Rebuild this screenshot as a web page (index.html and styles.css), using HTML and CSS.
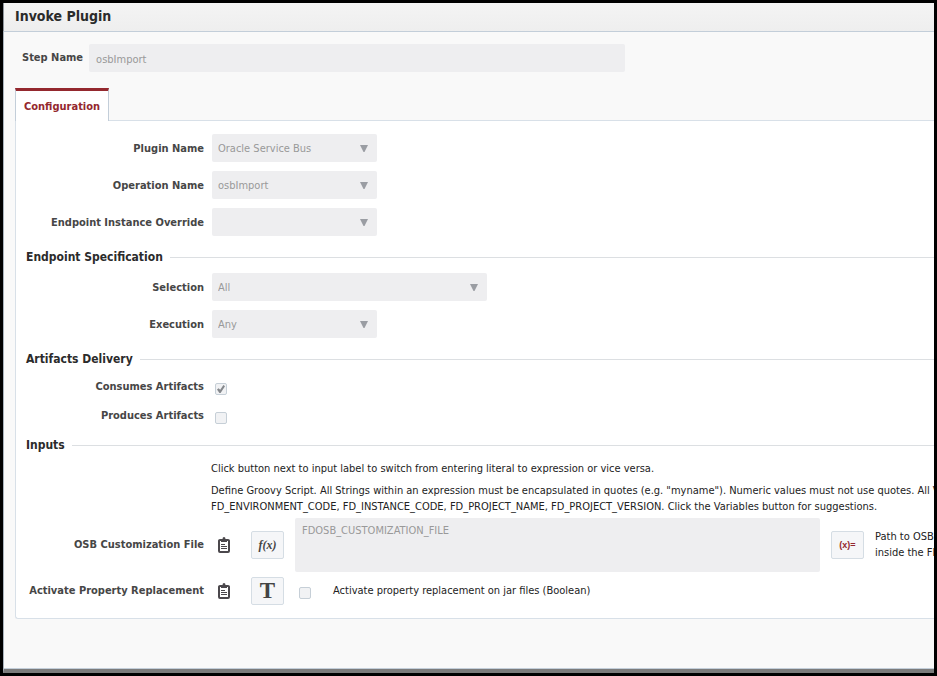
FILE: index.html
```html
<!DOCTYPE html>
<html lang="en">
<head>
<meta charset="utf-8">
<title>Invoke Plugin</title>
<link rel="stylesheet" href="styles.css">
</head>
<body>
<svg class="sprite" aria-hidden="true">
  <symbol id="clipboard" viewBox="0 0 12 16">
    <path d="M1 3.500V14Q1 15 2 15H10Q11 15 11 14V3.500" fill="none" stroke="#4b484c" stroke-width="2"/>
    <path d="M0 4Q0 2 2 2H3V4ZM12 4Q12 2 10 2H9V4ZM3 5V2H4.500Q4.500 0 6 0T7.500 2H9V5Z" fill="#4b484c"/>
    <path d="M3 7.500H7M3 9.500H9M3 11.500H9" stroke="#4b484c" stroke-width="1"/>
  </symbol>
  <symbol id="arrow" viewBox="0 0 8 8">
    <path d="M0 0H8L4.500 7H3.500Z" fill="#9a9da3"/>
  </symbol>
</svg>
<main class="dialog">
  <header class="titlebar"><h1>Invoke Plugin</h1></header>
  <form class="content">
    <div class="step">
      <label for="step">Step Name</label>
      <input class="field" id="step" type="text" value="osbImport" disabled>
    </div>
    <nav class="tabs"><a class="tab" href="#config">Configuration</a></nav>
    <section class="panel" id="config">
      <div class="rows">
        <div class="row">
          <label for="plugin">Plugin Name</label>
          <div class="select"><select class="field" id="plugin" disabled><option>Oracle Service Bus</option></select><svg><use href="#arrow"/></svg></div>
        </div>
        <div class="row">
          <label for="operation">Operation Name</label>
          <div class="select"><select class="field" id="operation" disabled><option>osbImport</option></select><svg><use href="#arrow"/></svg></div>
        </div>
        <div class="row">
          <label for="override">Endpoint Instance Override</label>
          <div class="select"><select class="field" id="override" disabled><option></option></select><svg><use href="#arrow"/></svg></div>
        </div>
      </div>

      <h2>Endpoint Specification</h2>
      <div class="rows">
        <div class="row">
          <label for="selection">Selection</label>
          <div class="select wide"><select class="field" id="selection" disabled><option>All</option></select><svg><use href="#arrow"/></svg></div>
        </div>
        <div class="row">
          <label for="execution">Execution</label>
          <div class="select"><select class="field" id="execution" disabled><option>Any</option></select><svg><use href="#arrow"/></svg></div>
        </div>
      </div>

      <h2>Artifacts Delivery</h2>
      <div class="rows">
        <div class="row check">
          <label for="consumes">Consumes Artifacts</label>
          <input id="consumes" type="checkbox" checked disabled>
        </div>
        <div class="row check">
          <label for="produces">Produces Artifacts</label>
          <input id="produces" type="checkbox" disabled>
        </div>
      </div>

      <h2>Inputs</h2>
      <div class="help">
        <p>Click button next to input label to switch from entering literal to expression or vice versa.</p>
        <p>Define Groovy Script. All Strings within an expression must be encapsulated in quotes (e.g. "myname"). Numeric values must not use quotes. All Var<br>FD_ENVIRONMENT_CODE, FD_INSTANCE_CODE, FD_PROJECT_NAME, FD_PROJECT_VERSION. Click the Variables button for suggestions.</p>
      </div>
      <div class="inputs">
        <div class="row input">
          <label for="custom">OSB Customization File</label>
          <svg class="clip"><use href="#clipboard"/></svg>
          <button type="button" class="btn fx">f(x)</button>
          <textarea class="field" id="custom" disabled>FDOSB_CUSTOMIZATION_FILE</textarea>
          <button type="button" class="btn var">(x)=</button>
          <p>Path to OSB<br>inside the FD</p>
        </div>
        <div class="row input">
          <label for="activate">Activate Property Replacement</label>
          <svg class="clip"><use href="#clipboard"/></svg>
          <button type="button" class="btn text">T</button>
          <input id="activate" type="checkbox" disabled>
          <p>Activate property replacement on jar files (Boolean)</p>
        </div>
      </div>
    </section>
  </form>
</main>
</body>
</html>
```
FILE: styles.css
```css
* { box-sizing: border-box; }

body {
  margin: 0;
  font: 11px/16px "DejaVu Sans Condensed", "Noto Sans", sans-serif;
  color: #333;
}

.sprite { display: none; }

.dialog {
  display: flex;
  flex-direction: column;
  min-height: 100vh;
  border: 3px solid #000;
  overflow: hidden;
}

.titlebar {
  height: 29px;
  padding-left: 11px;
  border-left: 1px solid #8f969d;
  border-bottom: 1px solid #c3ced9;
  background: linear-gradient(#f4f4f4, #eeeeee);
}

h1 {
  margin: 0;
  font-size: 14px;
  line-height: 26px;
  color: #2b2b2b;
}

.content {
  flex: 1;
  padding: 12px 0 0 11px;
  border-left: 1px solid #a9b3bc;
  border-bottom: 4px solid #7b7b7b;
  background: #f9f9f9;
  box-shadow: inset 0 -1px #c3ced9;
}

label { font-weight: bold; color: #464646; }

.step {
  display: flex;
  align-items: center;
  gap: 6px;
  padding-left: 7px;
}

.field {
  display: block;
  width: 100%;
  height: 28px;
  margin: 0;
  padding: 2px 6px 0;
  border: 0;
  border-radius: 2px;
  background: #eeeef0;
  color: #999;
  font: inherit;
  opacity: 1;
  appearance: none;
}

.step .field { max-width: 536px; padding-left: 7px; }

.tabs { display: flex; margin-top: 16px; }

.tab {
  position: relative;
  height: 33px;
  padding: 8px 8px 0;
  border: 1px solid #c3ced9;
  border-top: 3px solid #94282e;
  border-bottom: 0;
  background: #fff;
  color: #94282e;
  font-weight: bold;
  text-decoration: none;
}

.panel {
  margin-top: -1px;
  padding: 13px 0;
  border: 1px solid #d8e0e8;
  border-right: 0;
  border-bottom-left-radius: 3px;
  background: #fff;
  white-space: nowrap;
  overflow: hidden;
}

.rows { display: grid; gap: 9px; }

.row {
  display: flex;
  align-items: center;
}

.row label {
  flex: none;
  width: 188px;
  padding-top: 2px;
  text-align: right;
}

.select {
  position: relative;
  width: 165px;
  margin-left: 8px;
}

.select.wide { width: 275px; }

.select svg {
  position: absolute;
  top: 11px;
  right: 9px;
  width: 8px;
  height: 8px;
  pointer-events: none;
}

h2 {
  display: flex;
  align-items: center;
  gap: 7px;
  margin: 11px 0 6px 10px;
  font-size: 12px;
  line-height: 20px;
  color: #2b2b2b;
}

h2::after {
  content: "";
  flex: 1;
  height: 1px;
  background: #dcdfe2;
}

.check { align-items: flex-start; height: 20px; }
.check label { line-height: 20px; }
.check input { margin: 8px 0 0 11px; }

input[type="checkbox"] {
  display: grid;
  place-items: center;
  flex: none;
  width: 12px;
  height: 12px;
  border: 1px solid #c6cfd7;
  border-radius: 2px;
  background: #f1f2f4;
  appearance: none;
}

input[type="checkbox"]:checked::after {
  content: "";
  width: 8px;
  height: 8px;
  background: #85888c;
  clip-path: polygon(0 55%, 20% 40%, 40% 60%, 80% 0, 100% 15%, 45% 100%, 30% 100%);
}

.help { margin-left: 195px; }

p { margin: 0; color: #222; }
.help p { margin-bottom: 6px; }
.help p:last-child { margin-bottom: 3px; }

.inputs { display: grid; gap: 5px; }

.input label { padding: 0; }

.clip {
  flex: none;
  width: 12px;
  height: 16px;
  margin: 0 21px 0 14px;
}

.btn {
  flex: none;
  width: 33px;
  height: 28px;
  margin: 0;
  padding: 0;
  border: 1px solid #d5dde4;
  border-radius: 2px;
  background: #f5f6f8;
  color: #444;
  text-align: center;
}

.fx { font: italic bold 12px/24px "Liberation Serif", serif; }
.text { font: bold 23px/26px "Liberation Serif", serif; }
.var { font: bold 9px/24px "Liberation Sans", sans-serif; color: #94282e; }

.input textarea {
  flex: none;
  width: 525px;
  height: 54px;
  margin: 0 11px;
  padding: 5px 7px;
  resize: none;
}

.input .var { margin-right: 11px; }
.input input { margin: 4px 22px 0 15px; }
```
